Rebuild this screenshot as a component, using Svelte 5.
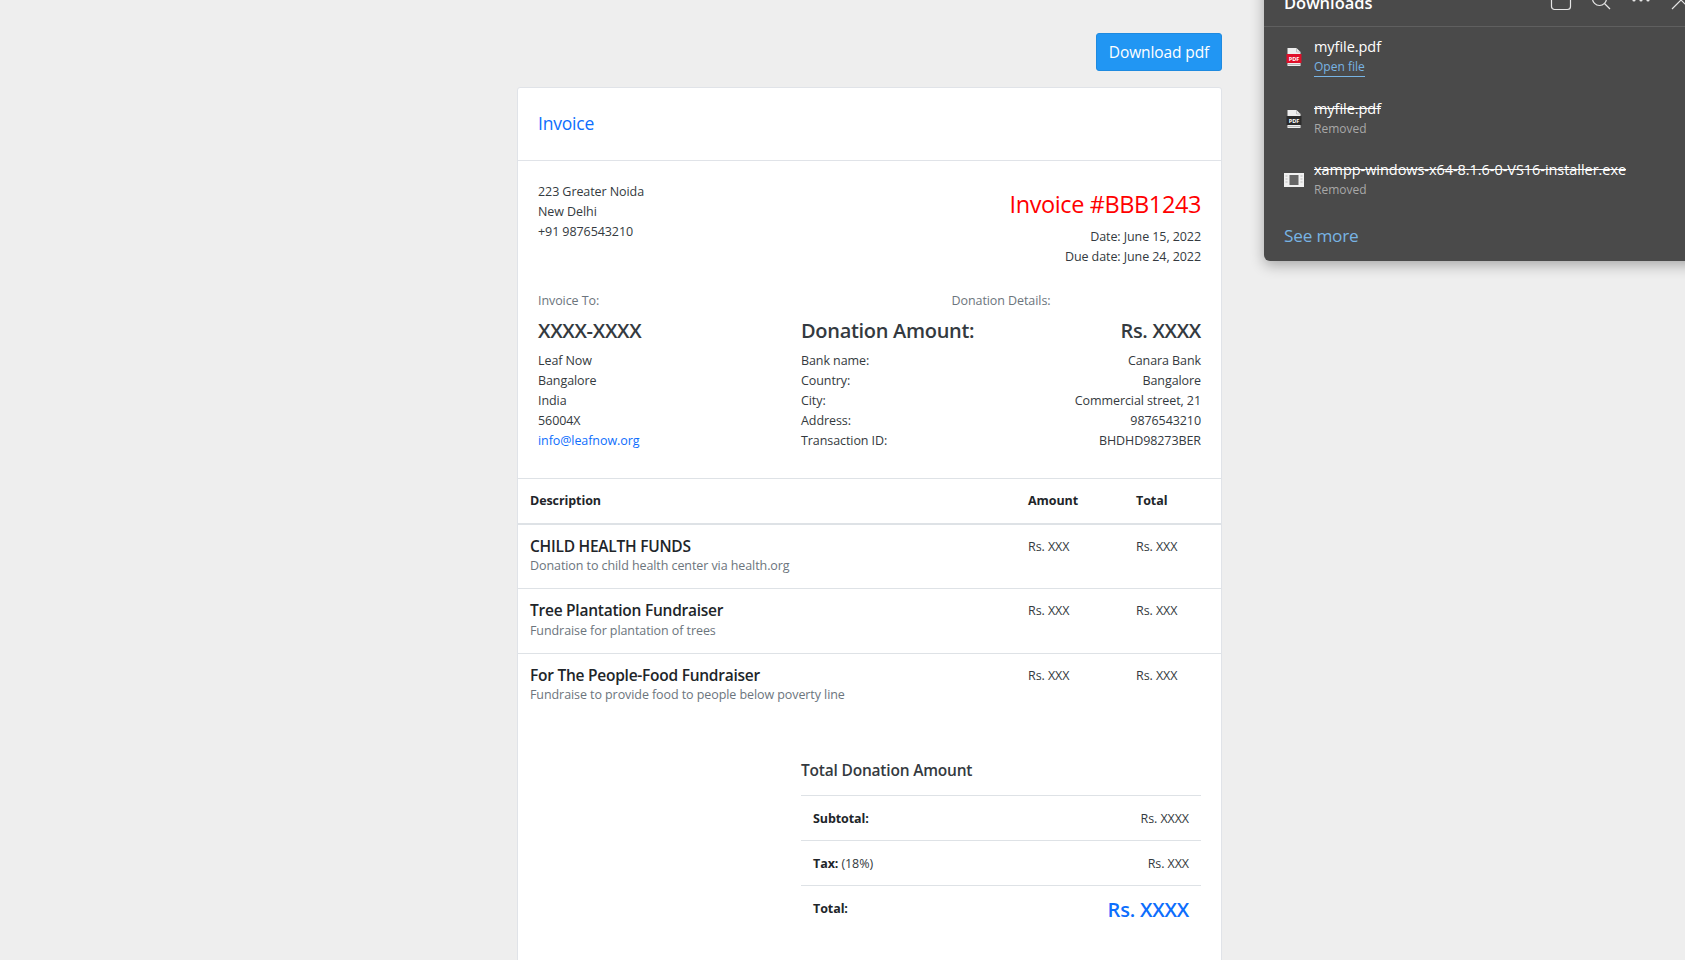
<script>
  const rows = [
    { title: 'CHILD HEALTH FUNDS', sub: 'Donation to child health center via health.org' },
    { title: 'Tree Plantation Fundraiser', sub: 'Fundraise for plantation of trees' },
    { title: 'For The People-Food Fundraiser', sub: 'Fundraise to provide food to people below poverty line' }
  ];
  const bank = [
    ['Bank name:', 'Canara Bank'],
    ['Country:', 'Bangalore'],
    ['City:', 'Commercial street, 21'],
    ['Address:', '9876543210'],
    ['Transaction ID:', 'BHDHD98273BER']
  ];
</script>

<div class="page">
  <div class="wrap">
    <div class="toolbar"><button class="dl">Download pdf</button></div>
    <div class="card">
      <div class="card-head"><span class="head-text">Invoice</span></div>
      <div class="card-body">
        <div class="top">
          <div class="addr">
            <div>223 Greater Noida</div>
            <div>New Delhi</div>
            <div>+91 9876543210</div>
          </div>
          <div class="inv">
            <h3>Invoice #BBB1243</h3>
            <div>Date: June 15, 2022</div>
            <div>Due date: June 24, 2022</div>
          </div>
        </div>
        <div class="parties">
          <div class="to">
            <div class="muted">Invoice To:</div>
            <h4>XXXX-XXXX</h4>
            <div>Leaf Now</div>
            <div>Bangalore</div>
            <div>India</div>
            <div>56004X</div>
            <a href="#top">info@leafnow.org</a>
          </div>
          <div class="details">
            <div class="muted center">Donation Details:</div>
            <div class="amount"><h4>Donation Amount:</h4><h4>Rs. XXXX</h4></div>
            {#each bank as b}
              <div class="kv"><span>{b[0]}</span><span>{b[1]}</span></div>
            {/each}
          </div>
        </div>
      </div>
      <div class="table">
        <div class="tr th">
          <div class="c1">Description</div><div class="c2">Amount</div><div class="c3">Total</div>
        </div>
        {#each rows as r}
          <div class="tr item">
            <div class="c1"><h6>{r.title}</h6><div class="sub">{r.sub}</div></div>
            <div class="c2">Rs. XXX</div>
            <div class="c3">Rs. XXX</div>
          </div>
        {/each}
      </div>
      <div class="totals">
        <div class="tbox">
          <div class="ttitle">Total Donation Amount</div>
          <div class="trow"><span><b>Subtotal:</b></span><span>Rs. XXXX</span></div>
          <div class="trow"><span><b>Tax:</b> (18%)</span><span>Rs. XXX</span></div>
          <div class="trow last"><span><b>Total:</b></span><span class="grand">Rs. XXXX</span></div>
        </div>
      </div>
    </div>
  </div>

  <aside class="panel">
    <div class="phead">
      <span class="ptitle">Downloads</span>
      <div class="picons">
        <svg viewBox="0 0 24 24" width="24" height="24"><rect x="2.5" y="2.5" width="19" height="19" rx="3" fill="none" stroke="#e6e6e6" stroke-width="1.2"/></svg>
        <svg viewBox="0 0 24 24" width="24" height="24"><circle cx="10.5" cy="10.5" r="7" fill="none" stroke="#e6e6e6" stroke-width="1.2"/><path d="M15.5 15.5 L21 21" stroke="#e6e6e6" stroke-width="1.2"/></svg>
        <svg viewBox="0 0 24 24" width="24" height="24"><circle cx="5" cy="12" r="1.6" fill="#e6e6e6"/><circle cx="12" cy="12" r="1.6" fill="#e6e6e6"/><circle cx="19" cy="12" r="1.6" fill="#e6e6e6"/></svg>
        <svg viewBox="0 0 24 24" width="24" height="24"><path d="M3 3 L21 21 M21 3 L3 21" stroke="#e6e6e6" stroke-width="1.2"/></svg>
      </div>
    </div>
    <div class="ditem">
      <svg class="fi" viewBox="0 0 15 18" width="15" height="18">
        <path d="M1 0H10L14 4V18H1Z" fill="#eee"/>
        <path d="M10 0V4H14" fill="none" stroke="#aaa" stroke-width=".6"/>
        <rect x="0" y="6" width="15" height="9" fill="#e0102a"/>
        <text x="7.5" y="12.7" class="pdf">PDF</text>
        <rect x="1" y="16" width="13" height=".8" fill="#aaa"/>
      </svg>
      <div><div class="name">myfile.pdf</div><div class="sub2"><span class="open">Open file</span></div></div>
    </div>
    <div class="ditem">
      <svg class="fi" viewBox="0 0 15 18" width="15" height="18">
        <path d="M1 0H10L14 4V18H1Z" fill="#eee"/>
        <path d="M10 0V4H14" fill="none" stroke="#aaa" stroke-width=".6"/>
        <rect x="0" y="6" width="15" height="9" fill="#2b2b2b"/>
        <text x="7.5" y="12.7" class="pdf">PDF</text>
        <rect x="1" y="16" width="13" height=".8" fill="#aaa"/>
      </svg>
      <div><div class="name gone">myfile.pdf</div><div class="sub2 grey">Removed</div></div>
    </div>
    <div class="ditem">
      <svg class="fi" viewBox="0 0 20 14" width="20" height="14">
        <rect x="0" y="0" width="20" height="14" fill="#f1f1f1"/>
        <rect x="5.5" y="2" width="9" height="10" fill="#666"/>
        <path d="M1.5 3h2M1.5 6h2M1.5 9h2M16.5 3h2M16.5 6h2M16.5 9h2" stroke="#bbb" stroke-width="1"/>
      </svg>
      <div><div class="name gone">xampp-windows-x64-8.1.6-0-VS16-installer.exe</div><div class="sub2 grey">Removed</div></div>
    </div>
    <div class="more">See more</div>
  </aside>
</div>

<style>
  :global(body) { margin: 0; background: #eeeeee; overflow: hidden; }
  .page {
    height: 960px; overflow: hidden; position: relative;
    font-family: "Open Sans", "Noto Sans", sans-serif; font-size: 12.5px; letter-spacing: -0.08px; line-height: 20px; color: #343a40;
  }
  .wrap { width: 705px; margin-left: 517px; padding-top: 33px; }
  .toolbar { display: flex; justify-content: flex-end; margin-bottom: 16px; }
  .dl {
    width: 126px; height: 38px; background: #2196f3; color: #fff; border: 1px solid #1e8ae0; border-radius: 3px;
    font: 400 15.5px "Open Sans", sans-serif; letter-spacing: -0.1px; padding: 0;
  }
  .card { background: #fff; border: 1px solid #e0e3e8; border-radius: 3px; }
  .card-head { height: 73px; box-sizing: border-box; padding: 0 20px 2px; display: flex; align-items: center; font-size: 17.5px; color: #0d6efd; border-bottom: 1px solid #e0e3e8; }
  .head-text { letter-spacing: -0.2px; }
  .card-body { padding: 21px 20px 27px; }
  .top { display: flex; justify-content: space-between; margin-bottom: 24px; }
  .inv { text-align: right; padding-top: 8px; }
  h3 { margin: 0 0 8px; font-size: 23.5px; line-height: 29px; font-weight: 400; letter-spacing: -0.4px; color: #ff0000; }
  .parties { display: flex; }
  .to { width: 263px; }
  .details { width: 400px; }
  .muted { color: #6c757d; }
  .center { text-align: center; }
  h4 { margin: 7px 0 8px; font-size: 20px; line-height: 25px; font-weight: 600; letter-spacing: -0.3px; color: #343a40; }
  .to a { color: #0d6efd; text-decoration: none; }
  .amount, .kv, .trow { display: flex; justify-content: space-between; }
  .tr { display: flex; padding: 12px; border-top: 1px solid #dee2e6; }
  .th { font-weight: 700; color: #212529; border-bottom: 2px solid #dee2e6; }
  .th + .item { border-top: 0; }
  .c1 { width: 498px; }
  .c2 { width: 108px; }
  .item { color: #343a40; }
  .item:nth-child(3) .sub { margin-top: 1px; }
  h6 { margin: 0; font-size: 15.5px; line-height: 19px; font-weight: 600; letter-spacing: -0.25px; color: #212529; }
  .sub { color: #6c757d; }
  .totals { padding: 43px 20px 60px; display: flex; justify-content: flex-end; }
  .tbox { width: 400px; }
  .ttitle { font-size: 15.5px; font-weight: 600; line-height: 20px; letter-spacing: -0.2px; padding-bottom: 15px; border-bottom: 1px solid #dee2e6; }
  .trow { padding: 13px 12px 11px; border-bottom: 1px solid #dee2e6; }
  .trow b { color: #212529; }
  .trow.last { border-bottom: 0; }
  .grand { font-size: 20px; font-weight: 600; letter-spacing: -0.2px; color: #0d6efd; line-height: 24px; margin-top: -1px; }

  .panel {
    position: absolute; top: -26px; right: -20px; width: 441px; height: 287px; background: #4a4a4a;
    border-radius: 0 0 6px 6px; box-shadow: 0 4px 14px rgba(0,0,0,.3); color: #fff;
  }
  .phead { height: 53px; box-sizing: border-box; border-bottom: 1px solid #5f5f5f; padding: 0 12px 0 20px; display: flex; justify-content: space-between; align-items: center; }
  .ptitle { font-size: 16.5px; font-weight: 600; letter-spacing: 0; padding-top: 6px; }
  .picons { display: flex; gap: 16px; }
  .ditem { display: flex; align-items: center; height: 60px; margin-bottom: 1.5px; padding-left: 19px; }
  .fi { width: 22px; margin-right: 9px; flex: none; }
  .pdf { font: 700 5.6px "Open Sans", sans-serif; fill: #fff; text-anchor: middle; letter-spacing: 0; }
  .name { font-size: 14.5px; letter-spacing: -0.05px; }
  .gone { text-decoration: line-through; }
  .sub2 { font-size: 12px; letter-spacing: 0; }
  .grey { color: #a8a8a8; }
  .open { color: #78b4e4; border-bottom: 1px solid #78b4e4; display: inline-block; line-height: 19px; }
  .more { padding: 14px 0 0 20px; font-size: 17.2px; letter-spacing: -0.2px; color: #78b4e4; }
</style>
